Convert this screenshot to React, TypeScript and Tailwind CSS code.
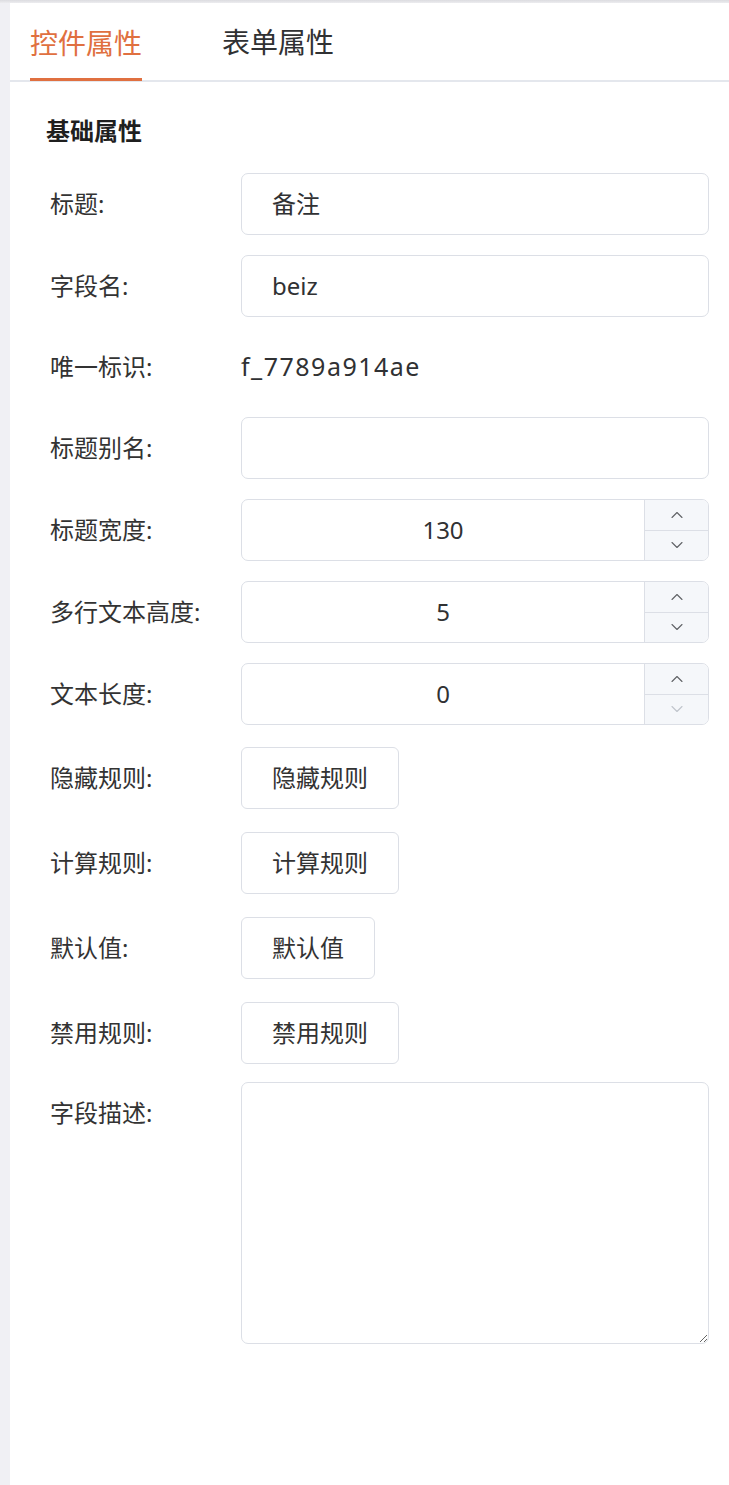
import { ChevronUp, ChevronDown } from 'lucide-react';

const font = { fontFamily: '"Noto Sans", "Noto Sans CJK SC", sans-serif' };

function Label({ children, top = false }: { children: string; top?: boolean }) {
  return (
    <div className={`w-[191px] shrink-0 text-[24px] leading-[32px] text-[#333] ${top ? 'pt-[15px]' : ''}`}>
      {children}
    </div>
  );
}

function TextInput({ value }: { value: string }) {
  return (
    <div className="flex h-[62px] flex-1 items-center rounded-[7px] border border-[#dcdfe6] bg-white px-[30px] text-[24px] text-[#303133]">
      {value}
    </div>
  );
}

function NumberInput({ value, minReached = false }: { value: string; minReached?: boolean }) {
  return (
    <div className="flex h-[62px] flex-1 overflow-hidden rounded-[7px] border border-[#dcdfe6] bg-white">
      <div className="flex flex-1 items-center justify-center text-[24px] text-[#303133]">{value}</div>
      <div className="flex w-[64px] flex-col border-l border-[#dcdfe6] bg-[#f5f7fa]">
        <div className="flex flex-1 items-center justify-center border-b border-[#dcdfe6] text-[#606266]">
          <ChevronUp size={20} strokeWidth={1.3} />
        </div>
        <div className={`flex flex-1 items-center justify-center ${minReached ? 'text-[#c0c4cc]' : 'text-[#606266]'}`}>
          <ChevronDown size={20} strokeWidth={1.3} />
        </div>
      </div>
    </div>
  );
}

function RuleButton({ text }: { text: string }) {
  return (
    <button className="h-[62px] rounded-[6px] border border-[#dcdfe6] bg-white px-[30px] text-[24px] text-[#333]">
      {text}
    </button>
  );
}

export default function App() {
  return (
    <div className="min-h-[1485px] bg-[#f0f0f4]" style={font}>
      <div className="h-[3px] bg-gradient-to-b from-[#dcdce0] to-[#ececef]" />
      <div className="ml-[10px] min-h-[1482px] bg-white">
        <div className="flex h-[79px] gap-[80px] border-b-2 border-[#e4e7ed] pl-[20px] text-[28px] leading-[40px]">
          <div className="-mb-[1px] flex flex-col justify-end border-b-[3px] border-[#e07040] pb-[15px] text-[#e07040]">
            控件属性
          </div>
          <div className="flex flex-col justify-end pb-[18px] text-[#303133]">表单属性</div>
        </div>

        <div className="pl-[36px] pt-[33px] text-[24px] font-bold leading-[32px] text-[#1f1f1f]">基础属性</div>

        <div className="flex flex-col pl-[40px] pr-[20px] pt-[26px]">
          <div className="mb-[20px] flex items-center">
            <Label>标题:</Label>
            <TextInput value="备注" />
          </div>
          <div className="mb-[20px] flex items-center">
            <Label>字段名:</Label>
            <TextInput value="beiz" />
          </div>
          <div className="mb-[20px] flex h-[60px] items-center">
            <Label>唯一标识:</Label>
            <div className="text-[25px] tracking-[1.5px] text-[#303133]">f_7789a914ae</div>
          </div>
          <div className="mb-[20px] flex items-center">
            <Label>标题别名:</Label>
            <TextInput value="" />
          </div>
          <div className="mb-[20px] flex items-center">
            <Label>标题宽度:</Label>
            <NumberInput value="130" />
          </div>
          <div className="mb-[20px] flex items-center">
            <Label>多行文本高度:</Label>
            <NumberInput value="5" />
          </div>
          <div className="mb-[22px] flex items-center">
            <Label>文本长度:</Label>
            <NumberInput value="0" minReached />
          </div>
          <div className="mb-[23px] flex items-center">
            <Label>隐藏规则:</Label>
            <RuleButton text="隐藏规则" />
          </div>
          <div className="mb-[23px] flex items-center">
            <Label>计算规则:</Label>
            <RuleButton text="计算规则" />
          </div>
          <div className="mb-[23px] flex items-center">
            <Label>默认值:</Label>
            <RuleButton text="默认值" />
          </div>
          <div className="mb-[18px] flex items-center">
            <Label>禁用规则:</Label>
            <RuleButton text="禁用规则" />
          </div>
          <div className="flex items-start">
            <Label top>字段描述:</Label>
            <textarea className="h-[262px] flex-1 rounded-[7px] border border-[#dcdfe6] bg-white px-[30px] py-[14px] text-[24px] text-[#303133] outline-none" />
          </div>
        </div>
      </div>
    </div>
  );
}
